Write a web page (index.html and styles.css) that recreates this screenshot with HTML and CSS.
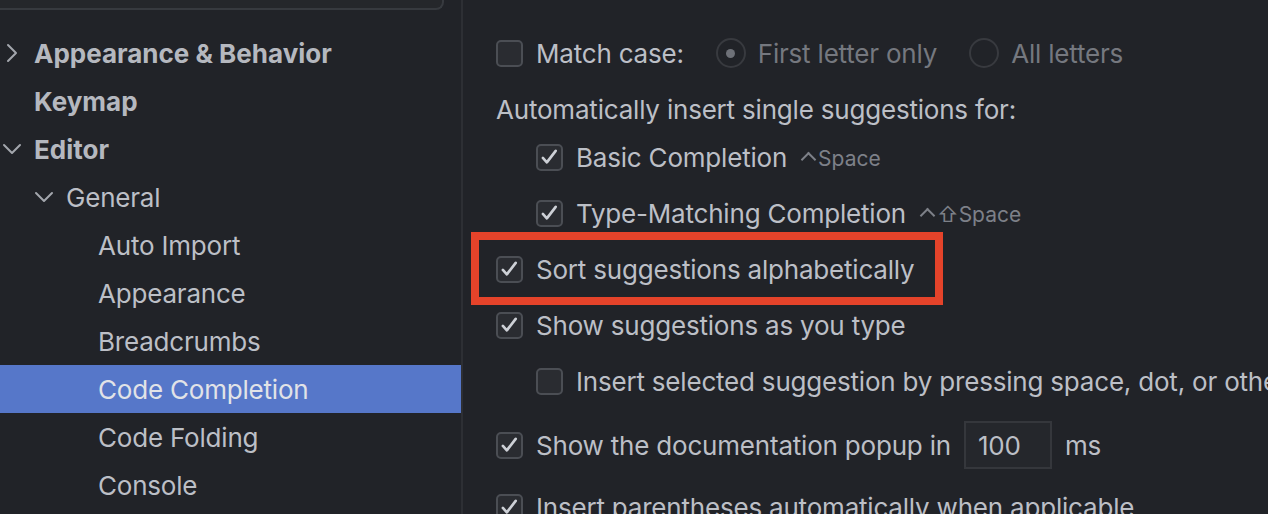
FILE: index.html
```html
<!DOCTYPE html>
<html lang="en">
<head>
<meta charset="utf-8">
<title>Settings – Code Completion</title>
<link rel="stylesheet" href="styles.css">
</head>
<body>
<div class="window">
  <aside class="sidebar">
    <div class="search"></div>
    <ul class="tree">
      <li class="node lvl0 bold">
        <svg class="chev" viewBox="0 0 24 24"><path d="M8 4 L16 12 L8 20"/></svg>
        <span>Appearance &amp; Behavior</span>
      </li>
      <li class="node lvl0 bold"><span class="noChev"></span><span>Keymap</span></li>
      <li class="node lvl0 bold">
        <svg class="chev" viewBox="0 0 24 24"><path d="M4 8 L12 16 L20 8"/></svg>
        <span>Editor</span>
      </li>
      <li class="node lvl1">
        <svg class="chev" viewBox="0 0 24 24"><path d="M4 8 L12 16 L20 8"/></svg>
        <span>General</span>
      </li>
      <li class="node lvl2"><span class="noChev"></span><span>Auto Import</span></li>
      <li class="node lvl2"><span class="noChev"></span><span>Appearance</span></li>
      <li class="node lvl2"><span class="noChev"></span><span>Breadcrumbs</span></li>
      <li class="node lvl2 selected"><span class="noChev"></span><span>Code Completion</span></li>
      <li class="node lvl2"><span class="noChev"></span><span>Code Folding</span></li>
      <li class="node lvl2"><span class="noChev"></span><span>Console</span></li>
    </ul>
  </aside>
  <main class="content">
    <div class="opts">
      <div class="row">
        <span class="cb"></span>
        <span class="lbl">Match case:</span>
        <span class="radio on"></span>
        <span class="lbl dim">First letter only</span>
        <span class="radio"></span>
        <span class="lbl dim">All letters</span>
      </div>
      <div class="row heading">Automatically insert single suggestions for:</div>
      <div class="row indent">
        <span class="cb checked"><svg viewBox="0 0 26 26"><path d="M5.5 13.5 L10 18.5 L20 5.5"/></svg></span>
        <span class="lbl">Basic Completion</span>
        <span class="key"><span class="caret" title="Ctrl"></span>Space</span>
      </div>
      <div class="row indent">
        <span class="cb checked"><svg viewBox="0 0 26 26"><path d="M5.5 13.5 L10 18.5 L20 5.5"/></svg></span>
        <span class="lbl">Type-Matching Completion</span>
        <span class="key"><span class="caret" title="Ctrl"></span>⇧Space</span>
      </div>
      <div class="row marked">
        <span class="cb checked"><svg viewBox="0 0 26 26"><path d="M5.5 13.5 L10 18.5 L20 5.5"/></svg></span>
        <span class="lbl">Sort suggestions alphabetically</span>
      </div>
      <div class="row">
        <span class="cb checked"><svg viewBox="0 0 26 26"><path d="M5.5 13.5 L10 18.5 L20 5.5"/></svg></span>
        <span class="lbl">Show suggestions as you type</span>
      </div>
      <div class="row indent">
        <span class="cb"></span>
        <span class="lbl">Insert selected suggestion by pressing space, dot, or other context-dependent keys</span>
      </div>
      <div class="row field">
        <span class="cb checked"><svg viewBox="0 0 26 26"><path d="M5.5 13.5 L10 18.5 L20 5.5"/></svg></span>
        <span class="lbl">Show the documentation popup in</span>
        <span class="input">100</span>
        <span class="lbl">ms</span>
      </div>
      <div class="row last">
        <span class="cb checked"><svg viewBox="0 0 26 26"><path d="M5.5 13.5 L10 18.5 L20 5.5"/></svg></span>
        <span class="lbl">Insert parentheses automatically when applicable</span>
      </div>
    </div>
  </main>
</div>
</body>
</html>
```

FILE: styles.css
```css
*, *::before, *::after { box-sizing: border-box; }

html, body {
  margin: 0;
  padding: 0;
  background: #212328;
  height: 100%;
  overflow: hidden;
}

body {
  font-family: "Inter", "DejaVu Sans", sans-serif;
  font-size: 26px;
  letter-spacing: -0.2px;
  color: #bcbfc6;
}

.window {
  display: flex;
  height: 514px;
  overflow: hidden;
}

/* ---------- sidebar ---------- */
.sidebar {
  width: 463px;
  flex: none;
  border-right: 2px solid #2d2f34;
}

.search {
  width: 448px;
  height: 10px;
  margin-left: -4px;
  background: #25272b;
  border: 2px solid #373a3f;
  border-top: none;
  border-radius: 0 0 8px 0;
}

.tree {
  list-style: none;
  margin: 0;
  padding: 19px 0 0;
}

.node {
  height: 48px;
  display: flex;
  align-items: center;
  white-space: nowrap;
}

.node.lvl0 { padding-left: 0; }
.node.lvl1 { padding-left: 32px; }
.node.lvl2 { padding-left: 64px; }

.chev, .noChev {
  width: 24px;
  height: 24px;
  flex: none;
  margin-right: 10px;
}

.chev path {
  fill: none;
  stroke: #a3a6ad;
  stroke-width: 2;
  stroke-linecap: round;
  stroke-linejoin: round;
}

.node.bold { font-weight: 700; color: #b5b8bf; letter-spacing: 0; }

.node.selected {
  background: #5677c9;
  color: #e1e3e7;
}

/* ---------- content ---------- */
.content {
  flex: 1;
  min-width: 0;
  overflow: hidden;
  padding-left: 33px;
}

.opts {
  display: flex;
  flex-direction: column;
  gap: 16px;
  padding-top: 33px;
}

.row {
  height: 40px;
  display: flex;
  align-items: center;
  white-space: nowrap;
}

.row.heading { margin-bottom: -8px; }
.row.indent { padding-left: 40px; }
.row.field { height: 48px; margin-top: 4px; }
.row.last { margin-top: 2px; }

.row.marked { position: relative; }
.row.marked::after {
  content: "";
  position: absolute;
  left: -25px;
  top: -17px;
  width: 472px;
  height: 73px;
  border: 8px solid #e5432a;
  pointer-events: none;
}

.lbl { margin-right: 32px; }
.row .lbl:last-child { margin-right: 0; }
.lbl.dim { color: #75787f; }

.cb {
  width: 27px;
  height: 27px;
  flex: none;
  border: 2px solid #4b4e54;
  border-radius: 5px;
  background: #2a2c31;
  margin-right: 13px;
  display: flex;
}

.cb svg { width: 100%; height: 100%; }
.cb path {
  fill: none;
  stroke: #cdd0d6;
  stroke-width: 3;
  stroke-linecap: round;
  stroke-linejoin: round;
}

.radio {
  width: 30px;
  height: 30px;
  flex: none;
  border: 2px solid #383a3f;
  border-radius: 50%;
  margin-right: 12px;
  display: flex;
  align-items: center;
  justify-content: center;
}

.radio.on::before {
  content: "";
  width: 9px;
  height: 9px;
  border-radius: 50%;
  background: #6e7178;
}

.key {
  font-size: 21px;
  letter-spacing: 0;
  color: #7d8088;
  margin-left: -18px;
  padding-top: 2px;
  display: flex;
  align-items: center;
}

.caret {
  width: 11px;
  height: 11px;
  border-left: 2px solid #7d8088;
  border-top: 2px solid #7d8088;
  transform: translateY(1px) rotate(45deg);
  margin: 0 4px 0 2px;
  flex: none;
}

.input {
  width: 88px;
  height: 48px;
  flex: none;
  background: #25272c;
  border: 2px solid #35373c;
  padding-left: 12px;
  display: flex;
  align-items: center;
  margin-right: 13px;
  margin-left: -19px;
}
```
